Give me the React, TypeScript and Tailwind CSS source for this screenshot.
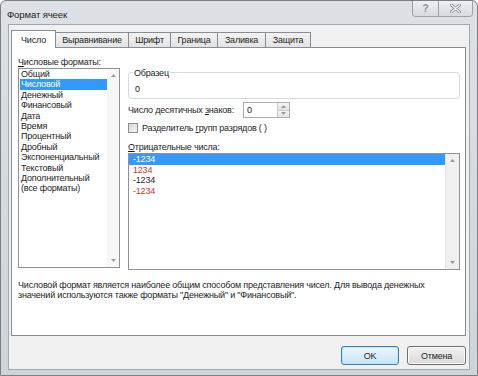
import React from "react";

const formats = [
  "Общий",
  "Числовой",
  "Денежный",
  "Финансовый",
  "Дата",
  "Время",
  "Процентный",
  "Дробный",
  "Экспоненциальный",
  "Текстовый",
  "Дополнительный",
  "(все форматы)",
];

const tabs = [
  { t: "Число", w: "w-[45px]" },
  { t: "Выравнивание", w: "w-[74px]" },
  { t: "Шрифт", w: "w-[43px]" },
  { t: "Граница", w: "w-[48px]" },
  { t: "Заливка", w: "w-[49px]" },
  { t: "Защита", w: "w-[46px]" },
];

const negs = [
  { t: "-1234", cls: "bg-[#3399ff] text-white" },
  { t: "1234", cls: "text-[#d4312c]" },
  { t: "-1234", cls: "text-[#1e1e1e]" },
  { t: "-1234", cls: "text-[#d4312c]" },
];

function UpArrow() {
  return (
    <svg width="5" height="3" viewBox="0 0 5 3">
      <path d="M0 3 L2.5 0 L5 3 Z" fill="#9a9a9a" />
    </svg>
  );
}
function DownArrow() {
  return (
    <svg width="5" height="3" viewBox="0 0 5 3">
      <path d="M0 0 L2.5 3 L5 0 Z" fill="#9a9a9a" />
    </svg>
  );
}

export default function App() {
  return (
    <div className="w-[478px] h-[376px] flex flex-col bg-gradient-to-b from-[#dde1e6] to-[#cfd4d9] border border-[#7b7f84] rounded-t-[6px] overflow-hidden font-['Liberation_Sans',sans-serif] text-[9px] tracking-[-0.2px] leading-[10px] text-[#1e1e1e]">
      {/* Title bar */}
      <div className="h-[23px] shrink-0 flex items-start justify-between">
        <div className="pl-[6px] pt-[8px] text-[9.5px] tracking-[-0.1px] leading-[11px] text-[#222]">Формат ячеек</div>
        <div className="mr-[4px] flex h-[16px] border border-t-0 border-[#9aa0a6] rounded-b-[4px] overflow-hidden">
          <div className="w-[26px] flex items-center justify-center bg-gradient-to-b from-[#eef0f2] to-[#d6dadf] border-r border-[#9aa0a6] text-[10px] font-bold text-[#8c9096]">
            ?
          </div>
          <div className="w-[33px] flex items-center justify-center bg-gradient-to-b from-[#eef0f2] to-[#d6dadf]">
            <svg width="11" height="9" viewBox="0 0 11 9">
              <path d="M1.5 1 L9.5 8 M9.5 1 L1.5 8" stroke="#8c9096" strokeWidth="3" strokeLinecap="round" />
              <path d="M1.5 1 L9.5 8 M9.5 1 L1.5 8" stroke="#f4f5f6" strokeWidth="1.2" strokeLinecap="round" />
            </svg>
          </div>
        </div>
      </div>

      {/* Client area */}
      <div className="flex-1 mx-[7px] mb-[5px] bg-[#f0f0f0] border border-[#a3a8ae] flex flex-col pl-[2px] pr-[3px] pt-[5px]">
        {/* Tabs */}
        <div className="h-[17px] flex items-end shrink-0">
          {tabs.map((tab, i) =>
            i === 0 ? (
              <div
                key={tab.t}
                className={`${tab.w} h-[18px] -mb-[1px] relative z-10 bg-white border border-b-0 border-[#898c95] flex items-center justify-center pt-[1px]`}
              >
                {tab.t}
              </div>
            ) : (
              <div
                key={tab.t}
                className={`${tab.w} h-[15px] -ml-[1px] bg-gradient-to-b from-[#f3f3f3] to-[#e3e3e3] border border-b-0 border-[#898c95] flex items-center justify-center`}
              >
                {tab.t}
              </div>
            )
          )}
        </div>

        {/* Panel */}
        <div className="h-[289px] shrink-0 bg-white border border-[#898c95] pl-[6px] pr-[5px] pt-[9px] flex flex-col">
          <div className="flex gap-[8px]">
            {/* Left column */}
            <div className="w-[102px] flex flex-col">
              <div className="h-[10px]">
                <span className="underline">Ч</span>исловые форматы:
              </div>
              <div className="mt-[1px] h-[200px] border border-[#8e9198] flex">
                <div className="flex-1 pl-[1px]">
                  {formats.map((f, i) => (
                    <div
                      key={f}
                      className={`h-[10.4px] leading-[10.4px] pl-[1px] whitespace-nowrap ${
                        i === 1 ? "bg-[#3399ff] text-white" : ""
                      }`}
                    >
                      {f}
                    </div>
                  ))}
                </div>
                <div className="w-[12px] bg-[#f7f7f7] flex flex-col items-center justify-between py-[5px]">
                  <UpArrow />
                  <DownArrow />
                </div>
              </div>
            </div>

            {/* Right column */}
            <div className="flex-1 flex flex-col">
              {/* Sample group */}
              <div className="mt-[15px] h-[27px] relative border border-[#d5dadf] rounded-[3px] pl-[6px] pt-[11px]">
                <div className="absolute -top-[5px] left-[4px] bg-white px-[1px] leading-[10px]">Образец</div>
                0
              </div>

              {/* Decimal places */}
              <div className="mt-[3px] h-[16px] flex items-center">
                <div className="w-[115px] whitespace-nowrap">
                  Число десятичных <span className="underline">з</span>наков:
                </div>
                <div className="w-[47px] h-[16px] border border-[#abadb3] bg-white flex">
                  <div className="flex-1 pl-[3px] flex items-center">0</div>
                  <div className="w-[12px] flex flex-col border-l border-[#c8cacf]">
                    <div className="flex-1 flex items-center justify-center bg-gradient-to-b from-[#f4f4f4] to-[#e2e2e2] border-b border-[#c8cacf]">
                      <UpArrow />
                    </div>
                    <div className="flex-1 flex items-center justify-center bg-gradient-to-b from-[#f4f4f4] to-[#e2e2e2]">
                      <DownArrow />
                    </div>
                  </div>
                </div>
              </div>

              {/* Checkbox */}
              <div className="mt-[5px] h-[10px] flex items-center">
                <div className="w-[10px] h-[10px] border border-[#8f8f8f] bg-gradient-to-br from-[#d8d8d8] to-[#f6f6f6]" />
                <div className="ml-[4px] whitespace-nowrap">
                  Разделитель <span className="underline">г</span>рупп разрядов ( )
                </div>
              </div>

              {/* Negative numbers */}
              <div className="mt-[9px] h-[10px]">
                <span className="underline">О</span>трицательные числа:
              </div>
              <div className="mt-[1px] h-[117px] border border-[#8e9198] flex">
                <div className="flex-1">
                  {negs.map((n, i) => (
                    <div key={i} className={`h-[10.5px] leading-[10.5px] pl-[4px] ${n.cls}`}>
                      {n.t}
                    </div>
                  ))}
                </div>
                <div className="w-[14px] bg-[#f0f0f0] border-l border-[#e4e4e4] flex flex-col items-center justify-between py-[5px]">
                  <UpArrow />
                  <DownArrow />
                </div>
              </div>
            </div>
          </div>

          {/* Description */}
          <div className="mt-[10px] leading-[10px] whitespace-nowrap">
            Числовой формат является наиболее общим способом представления чисел. Для вывода денежных
            <br />
            значений используются также форматы "Денежный" и "Финансовый".
          </div>
        </div>

        {/* Buttons */}
        <div className="mt-[10px] flex justify-end gap-[8px]">
          <div className="w-[58px] h-[19px] rounded-[3px] border border-[#3c7fb1] bg-gradient-to-b from-[#eaf6fd] to-[#c9e4f5] shadow-[inset_0_0_0_1px_#bfe3f9] flex items-center justify-center">
            OK
          </div>
          <div className="w-[59px] h-[19px] rounded-[3px] border border-[#707070] bg-gradient-to-b from-[#f2f2f2] to-[#d9d9d9] shadow-[inset_0_0_0_1px_#fcfcfc] flex items-center justify-center">
            Отмена
          </div>
        </div>
      </div>
    </div>
  );
}
